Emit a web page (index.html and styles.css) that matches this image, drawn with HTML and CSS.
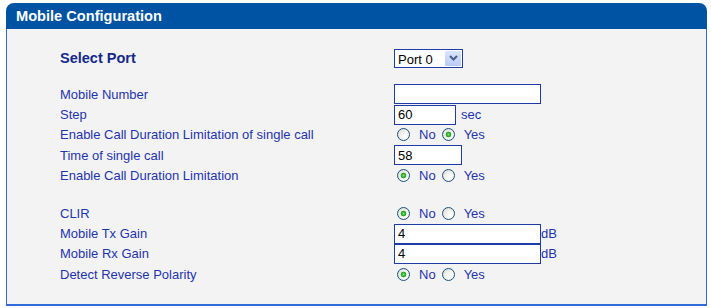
FILE: index.html
```html
<!DOCTYPE html>
<html>
<head>
<meta charset="utf-8">
<title>Mobile Configuration</title>
<link rel="stylesheet" href="styles.css">
</head>
<body>
<div class="panel">
  <div class="panel-head">Mobile Configuration</div>
  <div class="panel-body">
    <div class="row row-port">
      <span class="lbl strong">Select Port</span>
      <div class="select">
        <select class="select-el"><option>Port 0</option><option>Port 1</option></select>
        <span class="select-btn"><svg width="9" height="6" viewBox="0 0 9 6"><path d="M1 1 L4.5 4.5 L8 1" fill="none" stroke="#4a5f88" stroke-width="2"/></svg></span>
      </div>
    </div>

    <div class="group">
      <div class="row">
        <span class="lbl">Mobile Number</span>
        <input class="txt w-long" type="text" value="">
      </div>
      <div class="row">
        <span class="lbl">Step</span>
        <input class="txt w-step" type="text" value="60"><span class="unit gap">sec</span>
      </div>
      <div class="row">
        <span class="lbl">Enable Call Duration Limitation of single call</span>
        <div class="radios">
          <label class="opt"><input type="radio" name="single">No</label>
          <label class="opt"><input type="radio" name="single" checked>Yes</label>
        </div>
      </div>
      <div class="row">
        <span class="lbl">Time of single call</span>
        <input class="txt w-time" type="text" value="58">
      </div>
      <div class="row">
        <span class="lbl">Enable Call Duration Limitation</span>
        <div class="radios">
          <label class="opt"><input type="radio" name="limit" checked>No</label>
          <label class="opt"><input type="radio" name="limit">Yes</label>
        </div>
      </div>
    </div>

    <div class="group">
      <div class="row">
        <span class="lbl">CLIR</span>
        <div class="radios">
          <label class="opt"><input type="radio" name="clir" checked>No</label>
          <label class="opt"><input type="radio" name="clir">Yes</label>
        </div>
      </div>
      <div class="row">
        <span class="lbl">Mobile Tx Gain</span>
        <input class="txt w-long" type="text" value="4"><span class="unit">dB</span>
      </div>
      <div class="row">
        <span class="lbl">Mobile Rx Gain</span>
        <input class="txt w-long" type="text" value="4"><span class="unit">dB</span>
      </div>
      <div class="row">
        <span class="lbl">Detect Reverse Polarity</span>
        <div class="radios">
          <label class="opt"><input type="radio" name="polarity" checked>No</label>
          <label class="opt"><input type="radio" name="polarity">Yes</label>
        </div>
      </div>
    </div>
  </div>
</div>
</body>
</html>
```

FILE: styles.css
```css
body {
  margin: 0;
  background: #ffffff;
  font-family: Arial, "Liberation Sans", sans-serif;
}

.panel {
  margin: 3px 0 0 6px;
  width: 701px;
}

.panel-head {
  height: 26px;
  line-height: 26px;
  padding-left: 10px;
  background: #0052a3;
  color: #ffffff;
  font-size: 14.6px;
  font-weight: bold;
  border-radius: 8px 8px 0 0;
}

.panel-body {
  background: #f3f3f3;
  border: 1px solid #3169dc;
  border-top: 0;
  border-bottom-width: 2px;
  padding: 19px 0 19px 53px;
}

.row {
  display: flex;
  align-items: center;
  height: 20.4px;
}

.row-port {
  height: 20px;
  margin-bottom: 16px;
}

.group + .group {
  margin-top: 17px;
}

.lbl {
  width: 334px;
  flex: none;
  font-size: 13px;
  color: #1f33b0;
}

.lbl.strong {
  font-size: 14.5px;
  font-weight: bold;
  color: #14298a;
}

.txt {
  box-sizing: border-box;
  height: 20px;
  margin: 0;
  padding: 0 3px;
  border: 1px solid #1f3ba8;
  background: #ffffff;
  font-family: Arial, "Liberation Sans", sans-serif;
  font-size: 13px;
  color: #000000;
  outline: none;
}

.w-long { width: 147px; }
.w-step { width: 62px; }
.w-time { width: 68px; }

.unit {
  font-size: 13px;
  color: #1f33b0;
}

.unit.gap {
  margin-left: 5px;
}

.select {
  position: relative;
  box-sizing: border-box;
  width: 69px;
  height: 19px;
  border: 1px solid #1f3ba8;
  background: #ffffff;
}

.select-el {
  appearance: none;
  -webkit-appearance: none;
  width: 100%;
  height: 100%;
  margin: 0;
  padding: 0 0 0 3px;
  border: 0;
  background: transparent;
  font-family: Arial, "Liberation Sans", sans-serif;
  font-size: 13px;
  color: #000000;
  outline: none;
}

.select-btn {
  position: absolute;
  top: 1px;
  right: 1px;
  bottom: 1px;
  width: 16px;
  display: flex;
  align-items: center;
  justify-content: center;
  background: linear-gradient(#dbe5fd, #b9cbf6);
  border-radius: 1px;
  pointer-events: none;
}

.radios {
  display: flex;
  align-items: center;
  padding-left: 3px;
}

.opt {
  display: flex;
  align-items: center;
  font-size: 13px;
  color: #1f33b0;
  margin-right: 6px;
}

.opt input {
  appearance: none;
  -webkit-appearance: none;
  box-sizing: border-box;
  width: 13px;
  height: 13px;
  margin: 0 9px 0 0;
  border: 1px solid #1c5180;
  border-radius: 50%;
  background: radial-gradient(circle at 65% 65%, #ffffff 0, #f2f2ee 45%, #d4d4cc 100%);
}

.opt input:checked {
  background:
    radial-gradient(circle at 50% 50%, #8ee27f 0, #3bb53b 1.5px, #21a121 2.5px, rgba(33,161,33,0) 3.2px),
    radial-gradient(circle at 65% 65%, #ffffff 0, #f2f2ee 45%, #d4d4cc 100%);
}
```
